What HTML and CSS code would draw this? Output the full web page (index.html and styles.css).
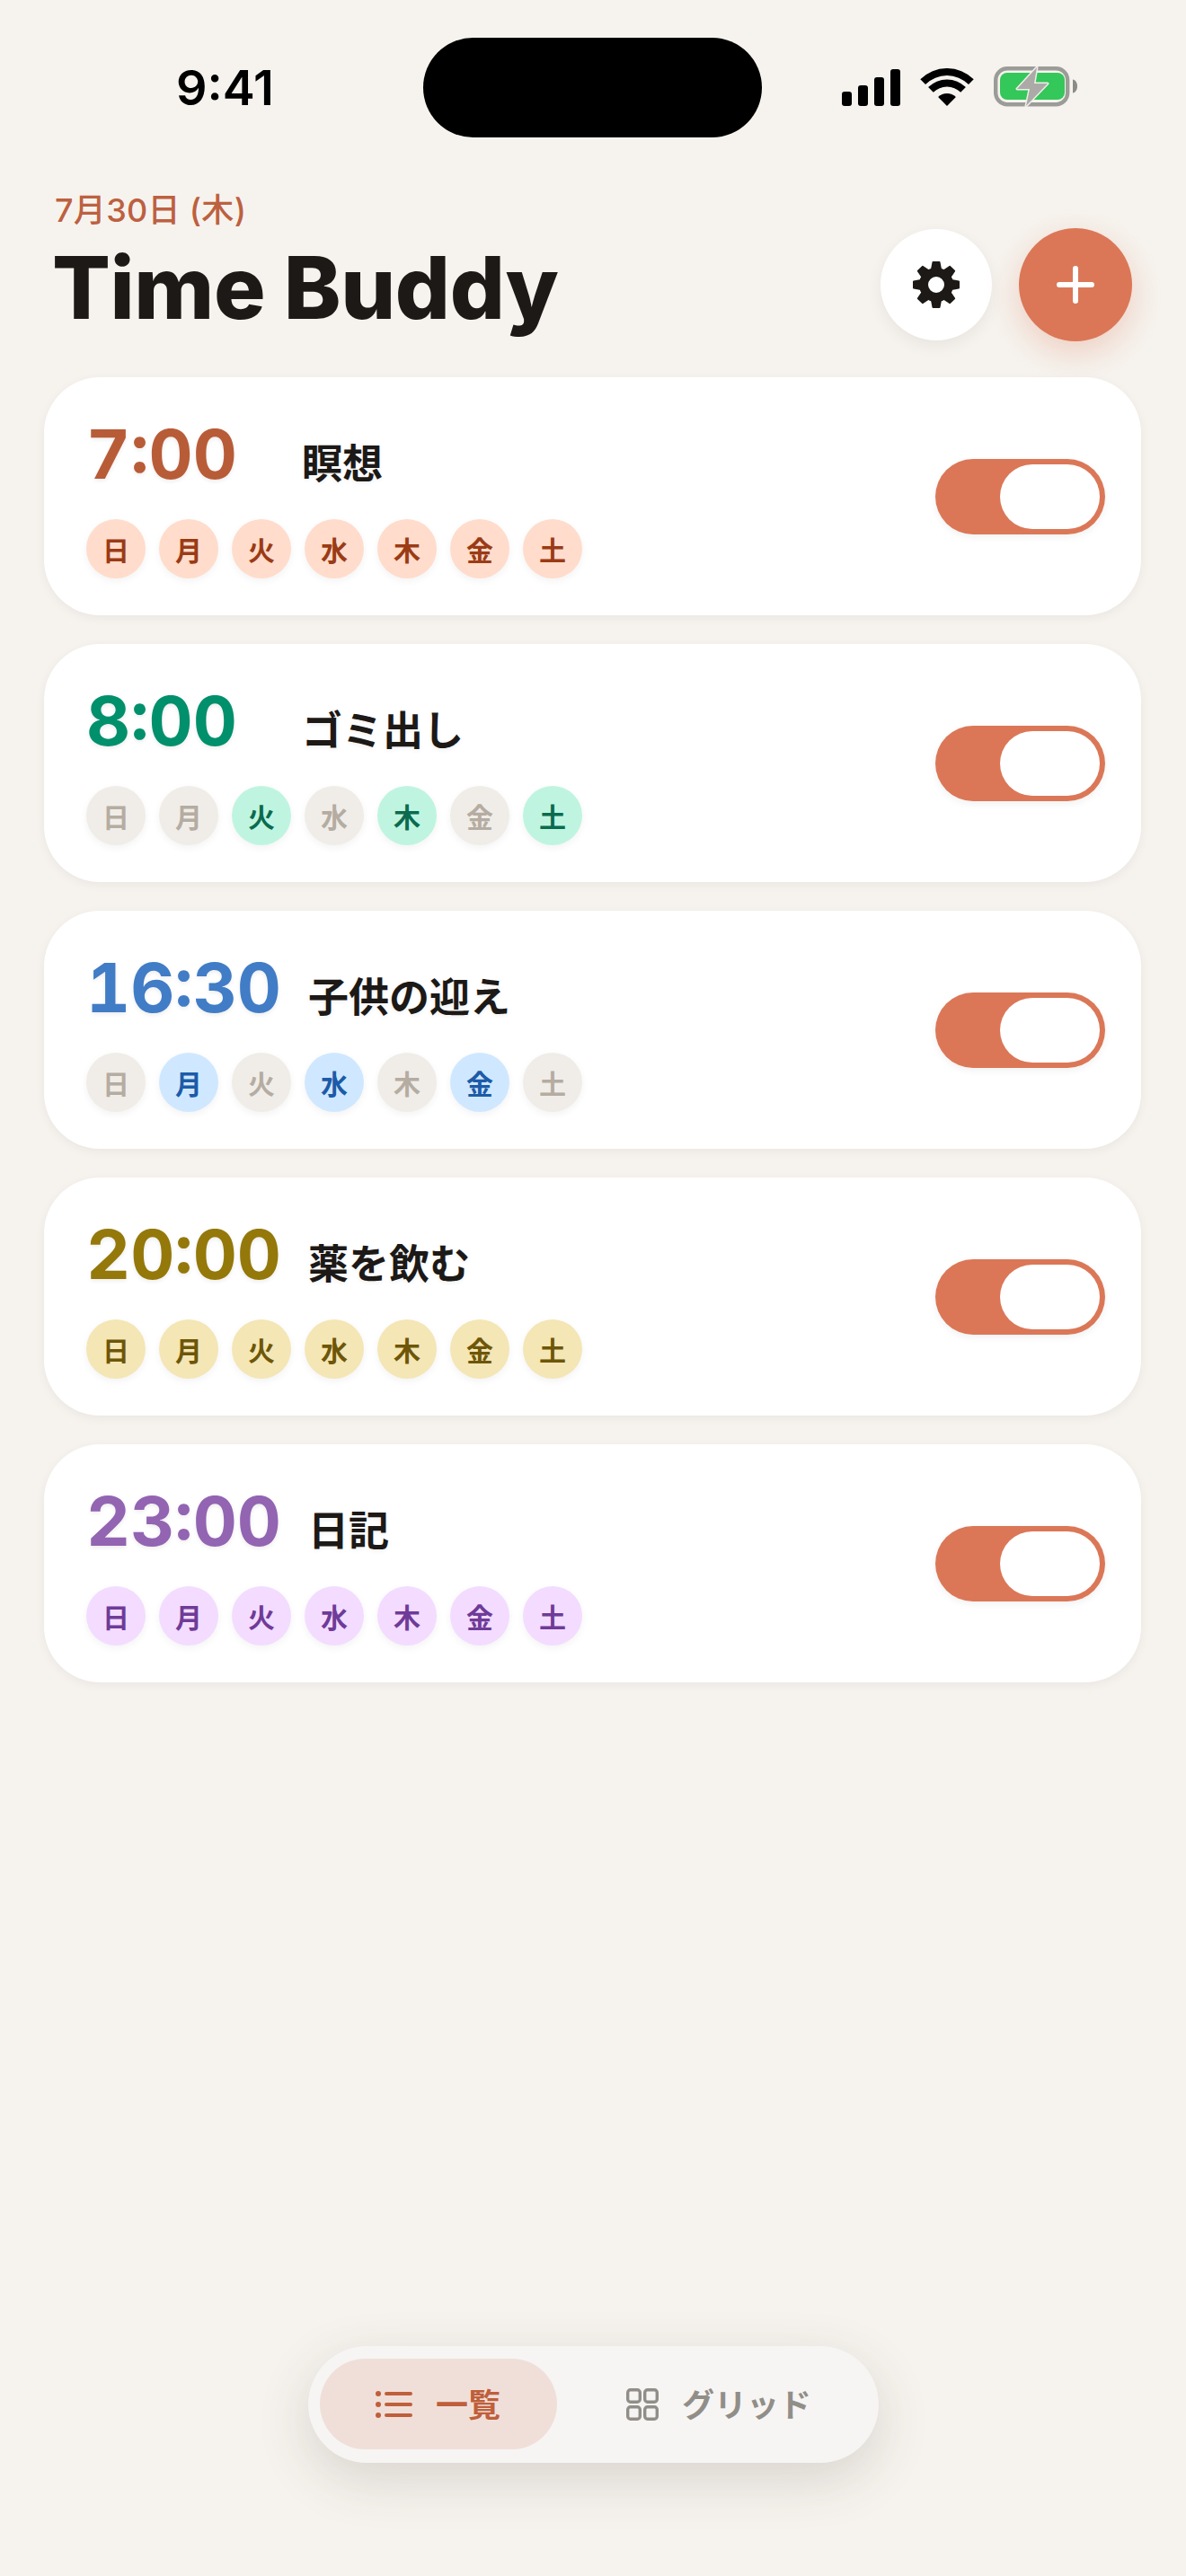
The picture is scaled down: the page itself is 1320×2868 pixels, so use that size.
FILE: index.html
```html
<!DOCTYPE html>
<html lang="ja">

<head>
    <meta charset="UTF-8">
    <meta name="viewport" content="width=device-width, initial-scale=1.0">
    <title>Time Buddy</title>
    <link rel="stylesheet" href="styles.css">
</head>

<body>
    <div class="page">
        <div class="statusbar">
            <div class="clock">9:41</div>
            <div class="island"></div>
            <div class="status-icons">
                <div class="signal">
                    <i class="bar1"></i><i class="bar2"></i><i class="bar3"></i><i class="bar4"></i>
                </div>
                <svg class="wifi" viewBox="0 0 60 42" width="60" height="42">
                    <path d="M.3 12.3A42 42 0 0 1 59.7 12.3L54 18A34 34 0 0 0 6 18Z" />
                    <path d="M9.1 21.1A29.5 29.5 0 0 1 50.9 21.1L45.2 26.8A21.5 21.5 0 0 0 14.8 26.8Z" />
                    <path d="M20.1 32.1A14 14 0 0 1 39.9 32.1L30 42Z" />
                </svg>
                <svg class="battery" viewBox="0 0 94 46" width="94" height="46">
                    <rect x="2.2" y="3.2" width="80" height="40" rx="13" fill="none" stroke="#9b9b97" stroke-width="4.4" />
                    <rect x="7" y="8" width="72" height="30" rx="8" fill="#34c759" />
                    <path d="M88 15.5c3 .5 5 3.500 5 7.500s-2 7-5 7.500z" fill="#8b8b87" />
                    <path d="M48 2L26 26H40L36 45L60 20H45Z" fill="#abaaa6" stroke="#efeeea" stroke-width="3" stroke-linejoin="round" paint-order="stroke" />
                </svg>
            </div>
        </div>

        <header class="header">
            <div>
                <div class="date">7月30日 (木)</div>
                <h1 class="app-title">Time Buddy</h1>
            </div>
            <div class="actions">
                <a href="javascript:;" class="btn-settings">
                    <svg viewBox="-27 -27 54 54" width="54" height="54">
                        <g fill="#1c1917" stroke="#1c1917" stroke-width="2" stroke-linejoin="round">
                            <path id="tooth" d="M-5-17L-3.500-25H3.500L5-17Z" />
                            <use href="#tooth" transform="rotate(45)" />
                            <use href="#tooth" transform="rotate(90)" />
                            <use href="#tooth" transform="rotate(135)" />
                            <use href="#tooth" transform="rotate(180)" />
                            <use href="#tooth" transform="rotate(225)" />
                            <use href="#tooth" transform="rotate(270)" />
                            <use href="#tooth" transform="rotate(315)" />
                        </g>
                        <circle r="14" fill="none" stroke="#1c1917" stroke-width="10" />
                    </svg>
                </a>
                <a href="javascript:;" class="btn-add">
                    <svg viewBox="0 0 42 42" width="42" height="42">
                        <path d="M21 3V39M3 21H39" stroke="#fff" stroke-width="6" stroke-linecap="round" />
                    </svg>
                </a>
            </div>
        </header>

        <main class="list">
            <section class="card rust">
                <div class="info">
                    <div class="top"><span class="time">7:00</span><span class="name">瞑想</span></div>
                    <div class="days">
                        <span class="day on">日</span><span class="day on">月</span><span class="day on">火</span><span class="day on">水</span><span class="day on">木</span><span class="day on">金</span><span class="day on">土</span>
                    </div>
                </div>
                <div class="toggle"><div class="thumb"></div></div>
            </section>

            <section class="card green">
                <div class="info">
                    <div class="top"><span class="time">8:00</span><span class="name">ゴミ出し</span></div>
                    <div class="days">
                        <span class="day">日</span><span class="day">月</span><span class="day on">火</span><span class="day">水</span><span class="day on">木</span><span class="day">金</span><span class="day on">土</span>
                    </div>
                </div>
                <div class="toggle"><div class="thumb"></div></div>
            </section>

            <section class="card blue">
                <div class="info">
                    <div class="top"><span class="time">16:30</span><span class="name">子供の迎え</span></div>
                    <div class="days">
                        <span class="day">日</span><span class="day on">月</span><span class="day">火</span><span class="day on">水</span><span class="day">木</span><span class="day on">金</span><span class="day">土</span>
                    </div>
                </div>
                <div class="toggle"><div class="thumb"></div></div>
            </section>

            <section class="card olive">
                <div class="info">
                    <div class="top"><span class="time">20:00</span><span class="name">薬を飲む</span></div>
                    <div class="days">
                        <span class="day on">日</span><span class="day on">月</span><span class="day on">火</span><span class="day on">水</span><span class="day on">木</span><span class="day on">金</span><span class="day on">土</span>
                    </div>
                </div>
                <div class="toggle"><div class="thumb"></div></div>
            </section>

            <section class="card purple">
                <div class="info">
                    <div class="top"><span class="time">23:00</span><span class="name">日記</span></div>
                    <div class="days">
                        <span class="day on">日</span><span class="day on">月</span><span class="day on">火</span><span class="day on">水</span><span class="day on">木</span><span class="day on">金</span><span class="day on">土</span>
                    </div>
                </div>
                <div class="toggle"><div class="thumb"></div></div>
            </section>
        </main>

        <nav class="tabbar">
            <a href="javascript:;" class="tab active">
                <svg viewBox="0 0 41 30" width="41" height="30" fill="currentColor">
                    <circle cx="3" cy="3" r="3" />
                    <circle cx="3" cy="15" r="3" />
                    <circle cx="3" cy="27" r="3" />
                    <path d="M12 3H39M12 15H39M12 27H39" stroke="currentColor" stroke-width="4" stroke-linecap="round" />
                </svg>
                <span>一覧</span>
            </a>
            <a href="javascript:;" class="tab">
                <svg viewBox="0 0 36 36" width="36" height="36" fill="none" stroke="currentColor" stroke-width="3.400">
                    <rect x="1.700" y="1.700" width="13.600" height="13.600" rx="3" />
                    <rect x="20.700" y="1.700" width="13.600" height="13.600" rx="3" />
                    <rect x="1.700" y="20.700" width="13.600" height="13.600" rx="3" />
                    <rect x="20.700" y="20.700" width="13.600" height="13.600" rx="3" />
                </svg>
                <span>グリッド</span>
            </a>
        </nav>
    </div>
</body>

</html>
```

FILE: styles.css
```css
* {
    margin: 0px;
    padding: 0px;
    box-sizing: border-box;
}

body {
    background-color: #f6f3ee;
    color: #1c1917;
    font-family: Inter, "Noto Sans CJK JP", sans-serif;
}

a {
    text-decoration: none;
    color: inherit;
}

.page {
    height: 2868px;
    display: flex;
    flex-direction: column;
    overflow: hidden;
}

/* status bar */
.statusbar {
    display: flex;
    align-items: center;
    height: 111px;
    margin-top: 42px;
}

.clock {
    width: 471px;
    padding-left: 196px;
    font-size: 54px;
    font-weight: 600;
    color: #000;
}

.island {
    width: 377px;
    height: 111px;
    border-radius: 56px;
    background-color: #000;
}

.status-icons {
    display: flex;
    align-items: flex-end;
    gap: 22px;
    height: 43px;
    margin-left: 89px;
}

.signal {
    display: flex;
    align-items: flex-end;
    gap: 7px;
    margin-bottom: 1px;
}

.signal i {
    display: block;
    width: 11px;
    border-radius: 3px;
    background-color: #000;
}

.signal .bar1 { height: 16px; }
.signal .bar2 { height: 23px; }
.signal .bar3 { height: 32px; }
.signal .bar4 { height: 41px; }

.wifi {
    flex: none;
    fill: #000;
    margin-bottom: 1px;
}

.battery {
    flex: none;
}

/* header */
.header {
    display: flex;
    justify-content: space-between;
    align-items: flex-start;
    margin-top: 58px;
    padding: 0 60px 0 61px;
}

.date {
    font-size: 36px;
    font-weight: 550;
    line-height: 46px;
    letter-spacing: .3px;
    color: #bd6040;
}

.app-title {
    margin-top: 5px;
    margin-left: -3px;
    font-size: 96px;
    font-weight: 850;
    line-height: 116px;
    letter-spacing: -.4px;
}

.actions {
    display: flex;
    align-items: center;
    gap: 30px;
    margin-top: 43px;
}

.btn-settings {
    width: 124px;
    height: 124px;
    display: flex;
    align-items: center;
    justify-content: center;
    border-radius: 50%;
    background-color: #fff;
    box-shadow: 0 6px 18px rgba(0, 0, 0, .06);
}

.btn-add {
    width: 126px;
    height: 126px;
    display: flex;
    align-items: center;
    justify-content: center;
    border-radius: 50%;
    background-color: #db7757;
    box-shadow: 0 12px 36px rgba(219, 119, 87, .3);
}

/* cards */
.list {
    display: flex;
    flex-direction: column;
    gap: 32px;
    margin-top: 40px;
    padding: 0 50px 0 49px;
}

.card {
    display: flex;
    justify-content: space-between;
    align-items: center;
    height: 265px;
    padding: 0 40px 0 47px;
    border-radius: 62px;
    background-color: #fff;
    box-shadow: 0 3px 12px rgba(0, 0, 0, .05);
}

.top {
    display: flex;
    align-items: baseline;
    gap: 30px;
}

.time {
    min-width: 210px;
    font-size: 76px;
    font-weight: 700;
    line-height: 89px;
    font-variant-numeric: tabular-nums;
    text-shadow: 0 2px 5px rgba(0, 0, 0, .08);
}

.name {
    font-size: 45px;
    font-weight: 700;
    line-height: 1;
    text-shadow: 0 2px 5px rgba(0, 0, 0, .06);
}

.days {
    display: flex;
    gap: 15px;
    margin-top: 28px;
}

.day {
    width: 66px;
    height: 66px;
    display: flex;
    align-items: center;
    justify-content: center;
    border-radius: 50%;
    font-size: 30px;
    font-weight: 700;
    background-color: #f0ede8;
    color: #b5aca2;
    box-shadow: 0 3px 8px rgba(0, 0, 0, .05);
}

.rust .time { color: #b85c38; }
.rust .day.on { background-color: #ffdccb; color: #9a3b16; }

.green .time { color: #00906c; }
.green .day.on { background-color: #bff5e0; color: #0b6b4f; }

.blue .time { color: #417cc6; }
.blue .day.on { background-color: #cfe8ff; color: #1d5ba8; }

.olive .time { color: #94780a; }
.olive .day.on { background-color: #f4e6b5; color: #6e5608; }

.purple .time { color: #9264b2; }
.purple .day.on { background-color: #f3dcff; color: #6f3b98; }

/* toggle */
.toggle {
    display: flex;
    justify-content: flex-end;
    width: 189px;
    height: 84px;
    padding: 6px;
    border-radius: 42px;
    background-color: #db7757;
    box-shadow: 0 3px 9px rgba(0, 0, 0, .06);
}

.thumb {
    width: 111px;
    height: 72px;
    border-radius: 36px;
    background-color: #fff;
}

/* bottom tab bar */
.tabbar {
    display: flex;
    align-self: center;
    gap: 17px;
    width: 635px;
    height: 130px;
    margin-top: auto;
    margin-bottom: 126px;
    padding: 14px 14px 15px 13px;
    border-radius: 65px;
    background-color: #f6f5f3;
    box-shadow: 0 18px 60px rgba(60, 50, 40, .16);
}

.tab {
    display: flex;
    align-items: center;
    justify-content: center;
    flex: none;
    gap: 26px;
    height: 101px;
    border-radius: 51px;
    font-size: 36px;
    font-weight: 700;
    color: #918e88;
}

.tab span {
    margin-bottom: 3px;
}

.tab.active {
    width: 264px;
    background-color: #f0dfd9;
    color: #bf5f3b;
}

.tab:last-child {
    width: 327px;
}
```
